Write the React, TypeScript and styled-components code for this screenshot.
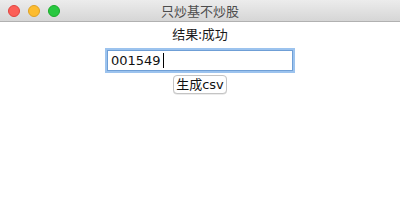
import React from "react";
import styled, { createGlobalStyle } from "styled-components";

const Global = createGlobalStyle`
  html, body { margin: 0; padding: 0; background: #ffffff; }
  body { font-family: "Noto Sans CJK SC", "Liberation Sans", sans-serif; }
`;

const Window = styled.div`
  width: 400px;
  height: 222px;
  display: flex;
  flex-direction: column;
  background: #ffffff;
  overflow: hidden;
`;

const TitleBar = styled.div`
  height: 22px;
  box-sizing: border-box;
  display: flex;
  align-items: center;
  padding-left: 8px;
  background: linear-gradient(#ececec, #d6d6d6);
  border-bottom: 1px solid #b1b1b1;
  position: relative;
`;

const Lights = styled.div`
  display: flex;
  gap: 8px;
`;

const Light = styled.span<{ $c: string; $b: string }>`
  width: 12px;
  height: 12px;
  border-radius: 50%;
  background: ${(p) => p.$c};
  box-sizing: border-box;
  border: 0.5px solid ${(p) => p.$b};
`;

const Title = styled.div`
  position: absolute;
  left: 0;
  right: 0;
  top: 0;
  bottom: 0;
  display: flex;
  align-items: center;
  justify-content: center;
  font-size: 13px;
  color: #4d4d4d;
  pointer-events: none;
`;

const Content = styled.div`
  display: flex;
  flex-direction: column;
  align-items: center;
  padding-top: 2px;
`;

const Result = styled.div`
  font-size: 13px;
  line-height: 19px;
  color: #1a1a1a;
`;

const Field = styled.div`
  margin-top: 7px;
  width: 186px;
  height: 21px;
  box-sizing: border-box;
  border: 1px solid #6f9fd6;
  box-shadow: 0 0 0 2px #9cc3ee;
  display: flex;
  align-items: center;
  padding-left: 3px;
  font-family: "DejaVu Sans", "Noto Sans CJK SC", sans-serif;
  font-size: 13px;
  color: #111;
  background: #fff;
`;

const Caret = styled.span`
  width: 1px;
  height: 15px;
  background: #000;
  margin-left: 2px;
`;

const Button = styled.button`
  margin-top: 4px;
  height: 19px;
  box-sizing: border-box;
  padding: 0 2px;
  border: 1px solid #c4c4c4;
  border-radius: 4px;
  background: #fff;
  font-family: "DejaVu Sans", "Noto Sans CJK SC", sans-serif;
  font-size: 13px;
  line-height: 16px;
  color: #111;
  box-shadow: 0 0.5px 0.5px rgba(0,0,0,0.15);
`;

export default function App() {
  return (
    <>
      <Global />
      <Window>
        <TitleBar>
          <Lights>
            <Light $c="#fc5f57" $b="#e0443e" />
            <Light $c="#fdbc2e" $b="#dea123" />
            <Light $c="#28c840" $b="#1aab29" />
          </Lights>
          <Title>只炒基不炒股</Title>
        </TitleBar>
        <Content>
          <Result>结果:成功</Result>
          <Field>
            001549
            <Caret />
          </Field>
          <Button>生成csv</Button>
        </Content>
      </Window>
    </>
  );
}
